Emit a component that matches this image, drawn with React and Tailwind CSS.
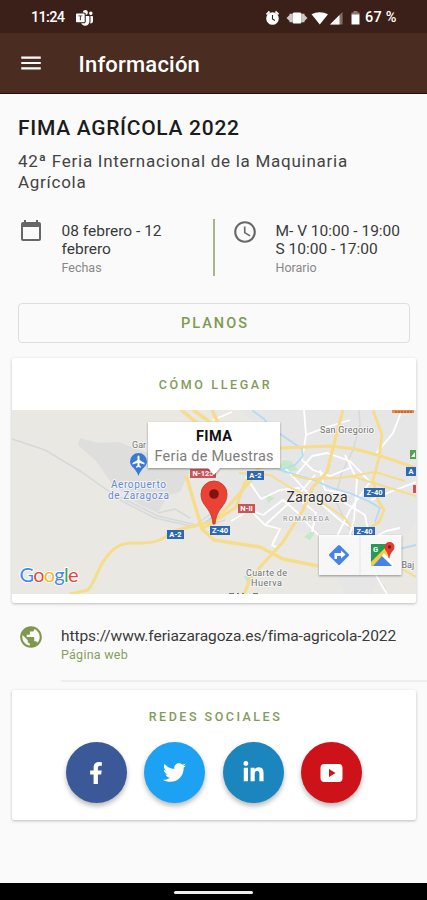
import React from "react";
import { MdMenu, MdAccessTime, MdPublic } from "react-icons/md";
import { FaFacebookF, FaTwitter, FaLinkedinIn } from "react-icons/fa";
import { BsMicrosoftTeams } from "react-icons/bs";

function StatusBar() {
  return (
    <div className="flex h-[33px] items-center bg-[#3a2018] pt-[3px] pl-[31px] pr-[28px] text-white">
      <span className="w-[34px] whitespace-nowrap pt-px text-[14.5px] font-medium leading-none tracking-[-0.7px]">11:24</span>
      <BsMicrosoftTeams className="ml-[11px] size-[17px]" />
      <svg className="ml-auto h-[18px] w-[80px]" viewBox="0 0 80 18">
        <g fill="#fff">
          <circle cx="6.500" cy="9.5" r="6.3" />
          <path d="M.500 5.4 3.500 2.500M12.500 5.4 9.500 2.500" stroke="#fff" strokeWidth="1.8" />
          <path d="M6.500 6v4l2.4 1.5" fill="none" stroke="#3a2018" strokeWidth="1.1" />
          <rect x="26.5" y="3.5" width="9" height="11" rx="1.5" />
          <path d="M26.500 4.800v8.400h-3V4.800zM35.500 4.800h3v8.400h-3zM23.500 6v6l-3-3zM38.500 6v6l3-3z" opacity=".75" />
          <path d="M45.500 5.300C50.500 2.500 57 2.500 62 5.300L53.800 15.500z" />
          <path d="M64 15.500 76.500 3v12.500z" opacity=".35" />
          <path d="M64 15.500 73.500 6v9.500z" />
        </g>
      </svg>
      <svg className="ml-[5px] h-[14px] w-[9px]" viewBox="0 0 9 14">
        <path d="M2.500 0h4v1.500H8.500V4H.500V1.500h2z" fill="#8b7872" />
        <path d="M.500 3.500h8V13.500H.500z" fill="#fff" />
      </svg>
      <span className="ml-[5px] w-[34px] whitespace-nowrap pt-px text-[14.500px] font-medium leading-none tracking-[0.200px]">67 %</span>
    </div>
  );
}

function Header() {
  return (
    <div className="flex h-[61px] items-center border-b border-[#2c0a08] bg-[#4a2c20] pl-[18px] text-white">
      <MdMenu className="size-[26px]" />
      <span className="ml-[34.500px] whitespace-nowrap pt-[4px] text-[22px] font-medium leading-none tracking-[0.200px]">Información</span>
    </div>
  );
}

function Shield({ x, y, w = 17, c = "#2c68b5", children }) {
  return (
    <g>
      <rect x={x} y={y} width={w} height="9" fill={c} />
      <text x={x + w / 2} y={y + 7.2} fontSize="7.500" fontWeight="700" fill="#fff" textAnchor="middle">{children}</text>
    </g>
  );
}

function CityMap() {
  return (
    <svg className="block h-[184px] w-full" viewBox="12 410 404 184" preserveAspectRatio="none">
      <rect x="12" y="410" width="404" height="184" fill="#e9e8e2" />
      <path d="M240 410H416V520L370 594H345L318 535 270 525 230 505 214 480 250 455 275 440z" fill="#e5e6e5" />
      <path d="M80 438 98 443 119 442 140 450 190 470 180 492 167 496 158 513 140 505 113 485 96 461 78 445z" fill="#dedfdd" />
      <path d="M283 460 291 461 298 470 284 473 279 468zM265 494 275 498 268 503zM304 537 315 528 314 534 310 540zM244 576 251 575 248 585z" fill="#c5e8c9" />
      <g fill="none" stroke="#d6d9db" strokeWidth="1.500">
        <path d="M12 439 45 450 80 471 110 492 132 503 158 516 205 527 225 520" />
        <path d="M120 500 155 518 195 527M197 524 213 512M158 513 175 509 190 518" />
        <path d="M359 410 360 425 353 450 341 475 335 500 350 530 365 560 386 590" />
      </g>
      <g fill="none" stroke="#fff" strokeWidth="1.800" strokeLinejoin="round">
        <path d="M213 420 232 412M304 410 306 435 324 428 350 420M306 435 302 460 313 470 330 476 350 468M402 410 393 433 375 455" />
        <path d="M296 475 312 456 327 453 350 461 370 482 350 510 335 540M345 455 357 480 354 520 346 548" />
        <path d="M231 521 250 510 263 515 283 500 297 512 318 535M246 477 261 499 280 490 300 488" />
        <path d="M248 508 265 525 280 529 272 545 278 548M265 525 300 493 315 475" />
        <path d="M340 500 365 515 370 540 386 531 400 528M371 500 390 492 416 482" />
        <path d="M285 468 305 490 341 521 378 543M295 496 316 513 312 532" />
        <path d="M353 540 370 565 387 594M320 470 325 490 350 494" />
      </g>
      <g fill="none" stroke="#b4daf5" strokeWidth="1.800">
        <path d="M252 410 264 419 270 427 302 449 303 456 295 465 280 470 300 476 314 480 332 488 352 494 370 502 380 508 375 522M399 549 416 545M203 524 213 517" />
      </g>
      <g fill="none" stroke="#f7dc8c" strokeLinejoin="round">
        <path d="M70 594 88 590C98 578 98 562 115 548 130 538 144 547 160 540L177 530 215 521 255 476" strokeWidth="3" />
        <path d="M181 410 197 423M193 410 210 422M212 410 218 423M186 475 202 529 214 540 240 544 260 547 283 559 318 566" strokeWidth="3.500" />
        <path d="M202 529 220 518 236 507 245 482 280 448 330 446 355 449 381 456 416 468" strokeWidth="3" />
        <path d="M343 410 335 440 327 472 313 487 303 510 283 542 261 566 250 580 244 594" strokeWidth="3.200" />
        <path d="M373 410 382 435 379 458 373 480 378 500 384 510 379 522 367 530" strokeWidth="2.800" />
        <path d="M239 473 270 475 291 488 326 505 345 518 351 527M292 475 307 479 340 478 375 472 405 481M351 476 390 488 416 496M402 569 416 577" strokeWidth="2" />
      </g>

      <g fontFamily="Roboto, 'Noto Sans', sans-serif">
        <rect x="392" y="410" width="22" height="3" fill="#e98d45" />
        <path d="M395 412h17" stroke="#884c29" strokeWidth="1" strokeDasharray="2 1" />
        <rect x="410" y="450" width="6" height="9" fill="#52a34d" />
        <path d="m411 457 4-5v5z" fill="#fff" />
        <rect x="413" y="485" width="3" height="8" fill="#cc5358" />
        <Shield x={190} y={469} w={26} c="#cc5358">N-125</Shield>
        <Shield x={247} y={471}>A-2</Shield>
        <Shield x={167} y={530}>A-2</Shield>
        <Shield x={210} y={526} w={20}>Z-40</Shield>
        <Shield x={238} y={504} c="#cc5358">N-II</Shield>
        <Shield x={364} y={488} w={21}>Z-40</Shield>
        <Shield x={354} y={527} w={21}>Z-40</Shield>
        <Shield x={406} y={467} w={10}>A</Shield>
        <g stroke="#f4f4f2" strokeWidth="2" paintOrder="stroke" strokeLinejoin="round">
          <text x="132" y="448" fontSize="9" fill="#777">Gar</text>
          <text x="320" y="433" fontSize="9" fill="#707070" textLength="54">San Gregorio</text>
          <text x="111" y="487.500" fontSize="10" fill="#6687d9" textLength="55">Aeropuerto</text>
          <text x="108" y="498.500" fontSize="10" fill="#6687d9" textLength="61">de Zaragoza</text>
          <text x="286.500" y="501.500" fontSize="14" fill="#333" textLength="61">Zaragoza</text>
          <text x="283" y="521" fontSize="7" fill="#8c8f90" textLength="46">ROMAREDA</text>
          <text x="246" y="576" fontSize="9" fill="#707070" textLength="41">Cuarte de</text>
          <text x="251" y="586" fontSize="9" fill="#707070" textLength="31">Huerva</text>
          <path d="M229 593.500h5M237 593.500h2M242 593.500h2M253 593.500h5" stroke="#777" strokeWidth="1.200" />
          <text x="401.500" y="568" fontSize="9" fill="#707070">Baj</text>
        </g>
        <path d="M138.500 476C136 468 130 467 130 461.500a8.500 8.500 0 0 1 17 0C147 467 141 468 138.500 476z" fill="#3979d7" />
        <path d="M138.500 455.500c.8 0 1 .8 1 2v2.500l5 3v1.500l-5-1.500v2.500l1.500 1.200v1l-2.500-.7-2.500.7v-1l1.500-1.200V463l-5 1.500V463l5-3v-2.500c0-1.200.2-2 1-2z" fill="#fff" />
        <path d="M213 524C211 506 201 507 201 494a13 13 0 0 1 26 0C227 507 217 506 215 524z" fill="#ea4335" stroke="#c3362b" strokeWidth=".8" />
        <circle cx="214" cy="494" r="4.800" fill="#811411" />

        <g style={{ filter: "drop-shadow(0 1px 1px rgba(0,0,0,.4))" }}>
          <path d="M148 422H280V468H220L214 475 208 468H148z" fill="#fff" />
          <rect x="319" y="535" width="82.500" height="40" fill="#fff" fillOpacity=".93" />
        </g>
        <text x="196" y="440.500" fontSize="14.500" fontWeight="700" fill="#111" textLength="36">FIMA</text>
        <text x="154.500" y="461" fontSize="14.500" fill="#7d7d7d" textLength="119">Feria de Muestras</text>
        <path d="M360 535v40" stroke="#e5e5e5" />

        <rect x="331.500" y="547.500" width="15" height="15" rx="1.500" transform="rotate(45 339 555)" fill="#4682e8" />
        <path d="M334.500 559v-6h6.500v-2.500l4.500 4-4.500 4V556h-4v3z" fill="#fff" />
        <path d="M371 544h20v22h-20z" fill="#f1f1f1" />
        <path d="M371 544h17l-2 9-15 12z" fill="#269b55" />
        <path d="M371 562 386 547l5 6-18 13h-2z" fill="#f7cc3e" />
        <path d="M373 566 382 556l10 10z" fill="#4683e9" />
        <path d="m382 556 2-3 9 10v3z" fill="#fff" />
        <path d="M388.500 558C388 551 384.500 551 384.500 547a5 5 0 0 1 10 0C394.500 551 390 552 389.500 558z" fill="#df3d33" />
        <circle cx="389.500" cy="547" r="1.700" fill="#8d1712" />
        <text x="373" y="552" fontSize="7.500" fontWeight="700" fill="#fff">G</text>
        <text x="19.500" y="582" fontFamily="Lato, sans-serif" fontSize="20" textLength="59" stroke="#fff" strokeWidth="2" paintOrder="stroke">
          <tspan fill="#4285f4">G</tspan><tspan fill="#e3473c">o</tspan><tspan fill="#f5b921">o</tspan><tspan fill="#4285f4">g</tspan><tspan fill="#3ba55b">l</tspan><tspan fill="#e3473c">e</tspan>
        </text>
      </g>
    </svg>
  );
}

function YoutubeMark() {
  return (
    <svg className="h-[18px] w-[23px]" viewBox="0 0 23 18">
      <rect x=".500" width="22" height="18" rx="4" fill="#fff" />
      <path d="M9 5v8l6.500-4z" fill="#ce1219" />
    </svg>
  );
}

const card = "ml-[12px] mr-[11px] rounded-[2px] bg-white shadow-[0_1px_3px_rgba(0,0,0,0.25)]";
const disc = "flex size-[61px] items-center justify-center rounded-full text-white shadow-[0_3px_5px_rgba(0,0,0,0.28)]";

export default function App() {
  return (
    <div className="flex h-[900px] w-[427px] flex-col overflow-hidden bg-[#fafafa] font-['Roboto','Noto_Sans',sans-serif] text-[#3a3a3a]">
      <StatusBar />
      <Header />
      <main className="flex flex-1 flex-col">
        <h1 className="ml-[18px] mt-[22px] whitespace-nowrap text-[21px] font-medium leading-[24px] tracking-[0.700px] text-[#1c1c1c]">FIMA AGRÍCOLA 2022</h1>
        <p className="ml-[18px] mt-[11px] whitespace-nowrap text-[17px] leading-[21px] tracking-[0.730px] text-[#444]">
          42ª Feria Internacional de la Maquinaria<br />Agrícola
        </p>

        <div className="mt-[26px] flex h-[57px]">
          <svg className="ml-[19px] size-6" viewBox="0 0 24 24" fill="#666">
            <path d="M20 3h-1V1h-2v2H7V1H5v2H4c-1.100 0-2 .9-2 2v15c0 1.100.9 2 2 2h16c1.100 0 2-.9 2-2V5c0-1.100-.9-2-2-2zm0 17H4V8h16v12z" />
          </svg>
          <div className="ml-[18.500px] w-[151.500px] whitespace-nowrap pt-[3px] text-[15.500px] leading-[18px]">
            08 febrero - 12<br />febrero
            <div className="mt-px text-[12.500px] leading-[18px] text-[#888]">Fechas</div>
          </div>
          <div className="w-[2px] bg-[#a8b68b]" />
          <MdAccessTime className="ml-[17px] size-[26px] text-[#686868]" />
          <div className="ml-[17.500px] whitespace-nowrap pt-[3px] text-[15.500px] leading-[18px]">
            M- V 10:00 - 19:00<br />S 10:00 - 17:00
            <div className="mt-px text-[12.500px] leading-[18px] text-[#888]">Horario</div>
          </div>
        </div>

        <button className="ml-[18px] mr-[17px] mt-[27px] flex h-[40px] shrink-0 items-center justify-center rounded-[4px] border border-[#dedede] pl-[2px] pt-[2px] text-[14.500px] font-medium tracking-[2.050px] text-[#7f9951]">PLANOS</button>

        <section className={`${card} mt-[15px] flex h-[245px] shrink-0 flex-col`}>
          <h2 className="flex h-[52px] items-center justify-center pl-[3px] pt-[2px] text-[12.500px] font-medium tracking-[2.600px] text-[#839b59]">CÓMO LLEGAR</h2>
          <CityMap />
        </section>

        <div className="mt-[21px] flex h-[58px] shrink-0">
          <MdPublic className="ml-[18px] size-[26px] text-[#7e994e]" />
          <div className="ml-[17px] flex-1 whitespace-nowrap border-b-2 border-[#eeeeee] pt-[2px] text-[15.500px] leading-[20px] tracking-[-0.080px]">
            https://www.feriazaragoza.es/fima-agricola-2022
            <div className="text-[12.500px] leading-[18px] tracking-[0.250px] text-[#87a05d]">Página web</div>
          </div>
        </div>

        <section className={`${card} mt-[8px] h-[130px] shrink-0`}>
          <h2 className="flex h-[52px] items-center justify-center pl-[3px] pt-[2px] text-[12.500px] font-medium tracking-[2.500px] text-[#839b59]">REDES SOCIALES</h2>
          <div className="flex justify-center gap-[17.500px]">
            <div className={`${disc} bg-[#3b5998]`}><FaFacebookF className="size-[22px]" /></div>
            <div className={`${disc} bg-[#1da1f2]`}><FaTwitter className="size-[23px]" /></div>
            <div className={`${disc} bg-[#1b86bd]`}><FaLinkedinIn className="size-[23px]" /></div>
            <div className={`${disc} bg-[#ce1219]`}><YoutubeMark /></div>
          </div>
        </section>
      </main>
      <footer className="flex h-[17px] shrink-0 items-center justify-center bg-black pt-[2px]">
        <div className="h-[3px] w-[79px] rounded-full bg-[#eee]" />
      </footer>
    </div>
  );
}
